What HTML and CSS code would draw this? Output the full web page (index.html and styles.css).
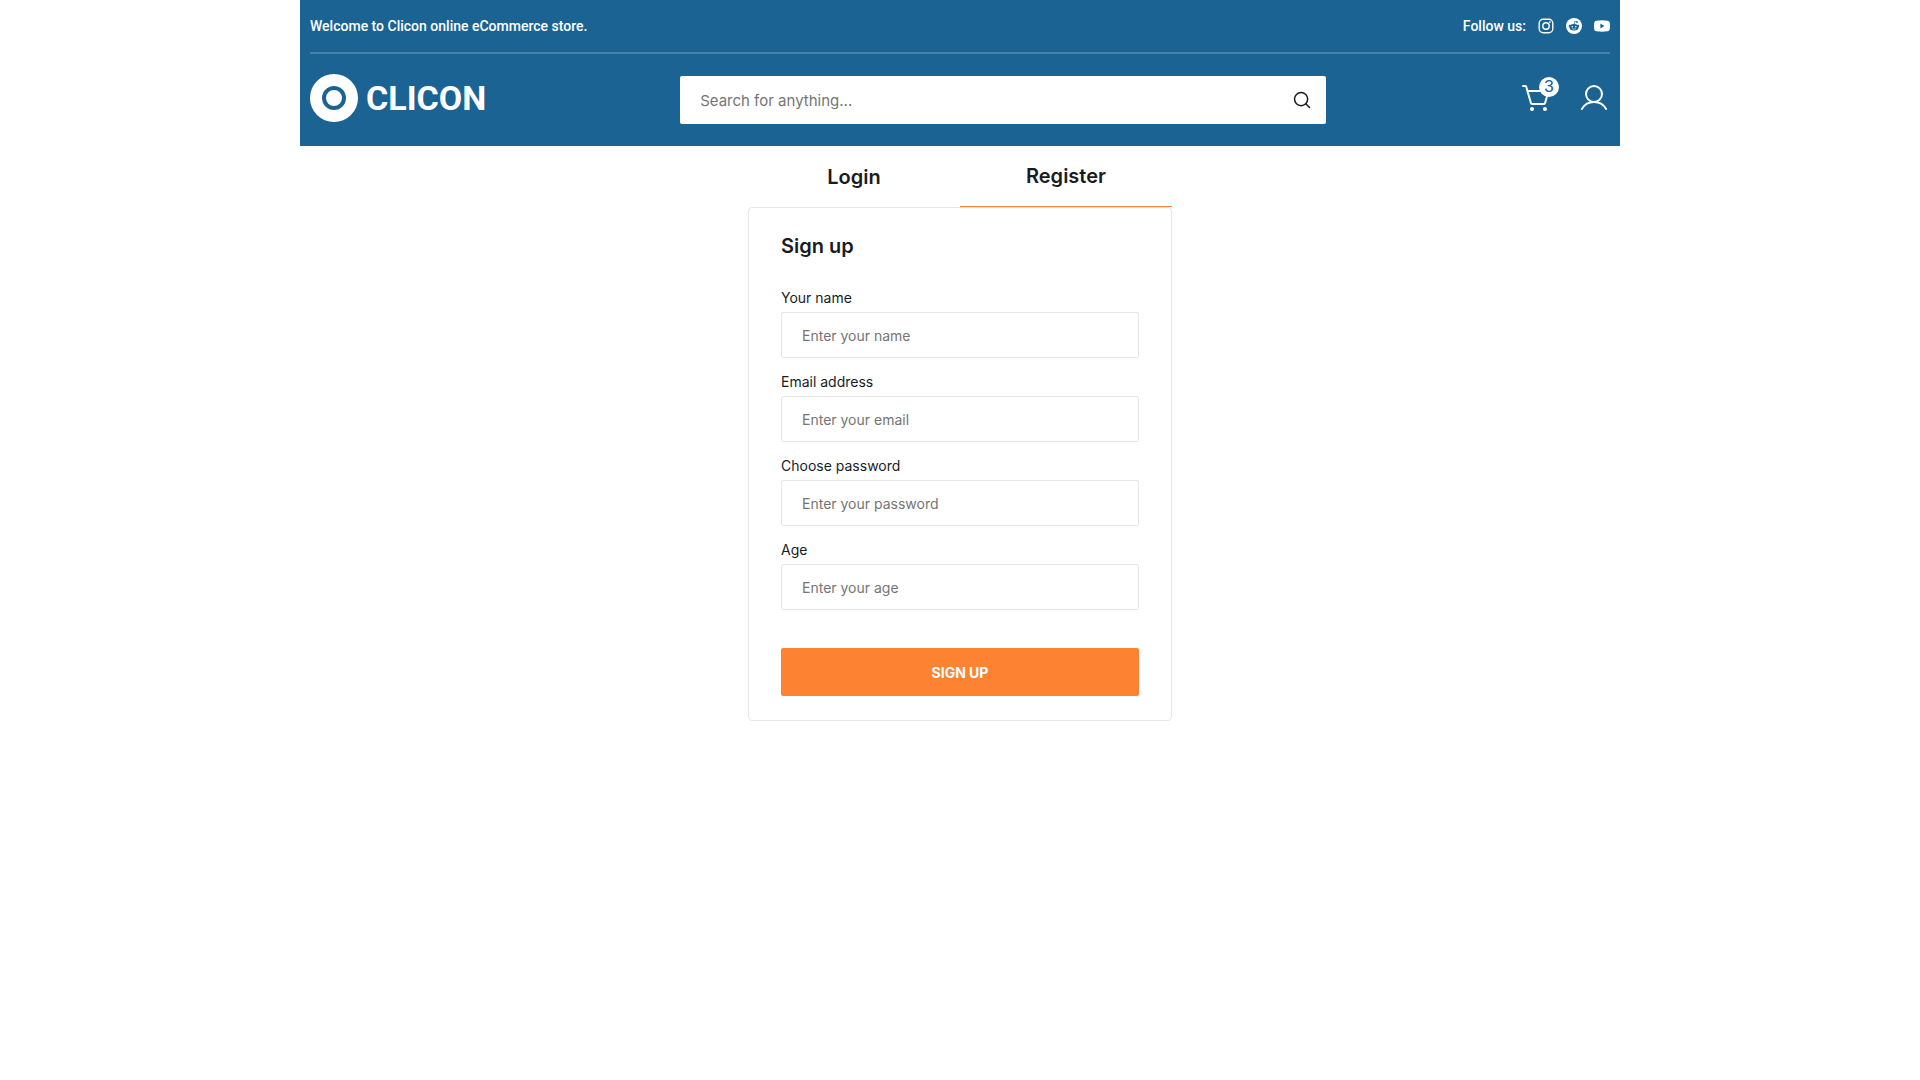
FILE: index.html
```html
<!DOCTYPE html>
<html lang="en">
  <head>
    <meta charset="UTF-8" />
    <meta name="viewport" content="width=device-width, initial-scale=1.0" />
    <title>Clicon</title>
    <link rel="stylesheet" href="styles.css">
  </head>
  <body>
    <header class="header">
      <div class="header-top">
        <p>Welcome to Clicon online eCommerce store.</p>
        <div class="socials">
          <span>Follow us:</span>
          <a href="#" aria-label="Instagram">
            <svg width="16" height="16" viewBox="0 0 16 16" fill="none" stroke="#fff" stroke-width="1.4">
              <rect x="1.2" y="1.2" width="13.6" height="13.6" rx="4" />
              <circle cx="8" cy="8" r="3.2" />
              <circle cx="11.9" cy="4.1" r="0.9" fill="#fff" stroke="none" />
            </svg>
          </a>
          <a href="#" aria-label="Reddit">
            <svg width="16" height="16" viewBox="0 0 16 16">
              <circle cx="8" cy="8" r="8" fill="#fff" />
              <g fill="#1b6392">
                <ellipse cx="8" cy="9.3" rx="4.5" ry="3.2" />
                <circle cx="3.8" cy="7.9" r="1.1" />
                <circle cx="12.2" cy="7.9" r="1.1" />
                <circle cx="11" cy="3.9" r="0.9" />
              </g>
              <path d="M8 6.5l.7-3 2.3.5" fill="none" stroke="#1b6392" stroke-width="0.7" />
              <circle cx="6.2" cy="8.7" r="0.8" fill="#fff" />
              <circle cx="9.8" cy="8.7" r="0.8" fill="#fff" />
              <path d="M6.2 10.7q1.8 1.1 3.6 0" fill="none" stroke="#fff" stroke-width="0.6" />
            </svg>
          </a>
          <a href="#" aria-label="YouTube">
            <svg width="16" height="16" viewBox="0 0 16 16" fill="#fff">
              <path fill-rule="evenodd" d="M2.4 2.7Q8 2 13.6 2.7Q15.4 2.9 15.7 4.6Q16.2 8 15.7 11.4Q15.4 13.1 13.6 13.3Q8 14 2.4 13.3Q.6 13.1.3 11.4Q-.2 8 .3 4.6Q.6 2.9 2.4 2.7ZM6.4 5.6V10.4L10.4 8Z" />
            </svg>
          </a>
        </div>
      </div>

      <div class="header-main">
        <a href="#" class="logo">
          <svg width="48" height="48" viewBox="0 0 48 48">
            <circle cx="24" cy="24" r="24" fill="#fff" />
            <circle cx="24" cy="24" r="10" fill="#fff" stroke="#1b6392" stroke-width="4" />
          </svg>
          <span>CLICON</span>
        </a>

        <form class="search">
          <input type="text" placeholder="Search for anything..." aria-label="Search" />
          <button type="button" aria-label="Search">
            <svg width="20" height="20" viewBox="0 0 20 20" fill="none" stroke="#191c1f" stroke-width="1.5" stroke-linecap="round">
              <circle cx="9.1" cy="9.1" r="6.6" />
              <path d="M13.8 13.8L17.5 17.5" />
            </svg>
          </button>
        </form>

        <div class="actions">
          <a href="#" class="cart" aria-label="Cart">
            <svg width="32" height="32" viewBox="0 0 32 32" fill="none" stroke="#fff" stroke-width="2" stroke-linecap="round" stroke-linejoin="round">
              <path d="M3 4H5.2A1 1 0 0 1 6.2 4.7L11 21.3A1 1 0 0 0 12 22H24A1 1 0 0 0 25 21.3L28.6 9H7.4" />
              <circle cx="12" cy="27" r="2" fill="#fff" stroke="none" />
              <circle cx="25" cy="27" r="2" fill="#fff" stroke="none" />
            </svg>
            <span class="badge">3</span>
          </a>
          <a href="#" aria-label="Account">
            <svg width="32" height="32" viewBox="0 0 32 32" fill="none" stroke="#fff" stroke-width="2" stroke-linecap="round" stroke-linejoin="round">
              <circle cx="16" cy="12" r="8" />
              <path d="M3.9 27A14 14 0 0 1 28.1 27" />
            </svg>
          </a>
        </div>
      </div>
    </header>

    <main class="auth">
      <div class="tabs">
        <button type="button" class="tab">Login</button>
        <button type="button" class="tab active">Register</button>
      </div>

      <form class="card">
        <h2>Sign up</h2>
        <div class="field">
          <label for="name">Your name</label>
          <input type="text" id="name" placeholder="Enter your name" />
        </div>
        <div class="field">
          <label for="email">Email address</label>
          <input type="email" id="email" placeholder="Enter your email" />
        </div>
        <div class="field">
          <label for="password">Choose password</label>
          <input type="password" id="password" placeholder="Enter your password" />
        </div>
        <div class="field">
          <label for="age">Age</label>
          <input type="text" id="age" placeholder="Enter your age" />
        </div>
        <button type="submit" class="submit">SIGN UP</button>
      </form>
    </main>
  </body>
</html>
```
FILE: styles.css
```css
* {
  box-sizing: border-box;
  margin: 0;
  padding: 0;
}

body {
  max-width: 1320px;
  margin: 0 auto;
  font-family: Inter, "Liberation Sans", sans-serif;
  font-size: 14px;
  line-height: 20px;
  color: #191c1f;
  background-color: #ffffff;
}

a {
  color: inherit;
  text-decoration: none;
}

svg {
  display: block;
}

input,
button {
  font-family: inherit;
}

input::placeholder {
  color: #757575;
}

/* Header */
.header {
  padding: 0 10px;
  background-color: #1b6392;
  color: #ffffff;
}

.header-top {
  display: flex;
  justify-content: space-between;
  align-items: center;
  padding: 16px 0;
  border-bottom: 2px solid #4982a8;
  font-family: Roboto, sans-serif;
  font-weight: 500;
}

.socials {
  display: flex;
  align-items: center;
  gap: 12px;
}

.header-main {
  display: flex;
  justify-content: space-between;
  align-items: center;
  padding: 18px 0 22px;
}

.logo {
  display: flex;
  align-items: center;
  gap: 8px;
  font-family: Roboto, sans-serif;
  font-size: 34px;
  font-weight: 700;
  line-height: 40px;
}

.search {
  display: flex;
  flex: 0 1 646px;
  height: 48px;
  margin-top: 4px;
  padding: 0 14px 0 20px;
  border-radius: 2px;
  background-color: #ffffff;
}

.search input {
  flex: 1;
  min-width: 0;
  border: none;
  outline: none;
  font-size: 15px;
}

.search button {
  border: none;
  background: none;
  cursor: pointer;
}

.actions {
  display: flex;
  gap: 26px;
}

.cart {
  position: relative;
}

.badge {
  position: absolute;
  top: -5px;
  right: -7px;
  width: 20px;
  height: 20px;
  border-radius: 50%;
  background-color: #ffffff;
  color: #1b6392;
  font-family: "Liberation Sans", sans-serif;
  font-size: 17px;
  text-align: center;
}

/* Register form */
.auth {
  max-width: 424px;
  margin: 0 auto;
}

.tabs {
  display: flex;
}

.tab {
  flex: 1;
  padding: 16px 0;
  border: none;
  background: none;
  color: #191c1f;
  font-size: 20px;
  font-weight: 600;
  line-height: 28px;
  text-align: center;
  cursor: pointer;
}

.tab.active {
  border-bottom: 1px solid #fd8333;
}

.card {
  padding: 24px 32px;
  border: 1px solid #e4e7e9;
  border-radius: 4px;
}

.card h2 {
  margin-bottom: 28px;
  font-size: 20px;
  font-weight: 600;
  line-height: 28px;
}

.field {
  margin-bottom: 14px;
}

.field label {
  display: block;
  margin-bottom: 4px;
}

.field input {
  width: 100%;
  height: 46px;
  padding: 0 20px;
  border: 1px solid #e4e7e9;
  border-radius: 2px;
  font-size: 14px;
}

.submit {
  width: 100%;
  height: 48px;
  margin-top: 24px;
  border: none;
  border-radius: 2px;
  background-color: #fd8333;
  color: #ffffff;
  font-size: 14px;
  font-weight: 700;
  cursor: pointer;
}
```
